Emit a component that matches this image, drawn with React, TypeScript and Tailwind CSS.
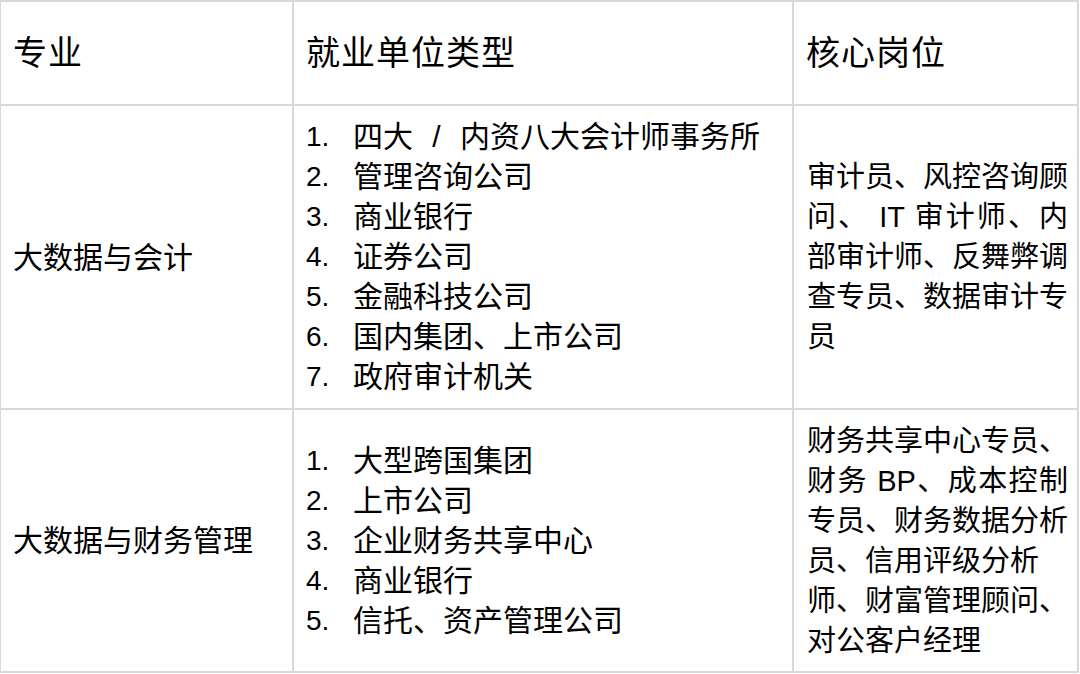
const font = { fontFamily: '"Liberation Sans", "Noto Sans CJK SC", sans-serif' };

const rows = [
  {
    major: "大数据与会计",
    units: [
      "四大 / 内资八大会计师事务所",
      "管理咨询公司",
      "商业银行",
      "证券公司",
      "金融科技公司",
      "国内集团、上市公司",
      "政府审计机关",
    ],
    posts: ["审计员、风控咨询顾", "问、 IT 审计师、内", "部审计师、反舞弊调", "查专员、数据审计专", "员"],
    full: [true, true, true, true, false],
  },
  {
    major: "大数据与财务管理",
    units: ["大型跨国集团", "上市公司", "企业财务共享中心", "商业银行", "信托、资产管理公司"],
    posts: ["财务共享中心专员、", "财务 BP、成本控制", "专员、财务数据分析", "员、信用评级分析", "师、财富管理顾问、", "对公客户经理"],
    full: [true, true, true, false, true, false],
  },
];

export default function App() {
  return (
    <div className="w-[1080px] h-[674px] bg-white" style={font}>
      <div className="grid grid-cols-[291px_498px_283px] grid-rows-[102px_302px_261px] gap-[2px] bg-[#d9d9d9] pl-px pt-[2px] pb-[2px] pr-[2px] w-[1079px] text-black">
        <div className="bg-white flex items-center pl-3 text-[34px] tracking-[1px]">专业</div>
        <div className="bg-white flex items-center pl-3 text-[34px] tracking-[1px]">就业单位类型</div>
        <div className="bg-white flex items-center pl-3 text-[34px] tracking-[1px]">核心岗位</div>

        {rows.map((r) => (
          <Row key={r.major} {...r} />
        ))}
      </div>
    </div>
  );
}

function UnitText({ text }: { text: string }) {
  // the slash line has wide gaps around "/"
  if (!text.includes(" / ")) return <span>{text}</span>;
  const [a, b] = text.split(" / ");
  return (
    <span className="flex">
      <span>{a}</span>
      <span className="w-[47px] text-center">/</span>
      <span>{b}</span>
    </span>
  );
}

function Row({ major, units, posts, full }: { major: string; units: string[]; posts: string[]; full: boolean[] }) {
  return (
    <>
      <div className="bg-white flex items-center pl-3 text-[30px]">{major}</div>
      <div className="bg-white flex flex-col justify-center pl-3 text-[30px] leading-[40px]">
        {units.map((u, i) => (
          <div key={u} className="flex whitespace-nowrap">
            <span className="w-[47px] text-[28px]">{i + 1}.</span>
            <UnitText text={u} />
          </div>
        ))}
      </div>
      <div className="bg-white flex flex-col justify-center pl-[13px] text-[29px] leading-[40px]">
        {posts.map((p, i) => (
          <div
            key={p}
            className={full[i] ? "w-[261px] whitespace-nowrap [text-align-last:justify]" : "whitespace-nowrap"}
          >
            {p}
          </div>
        ))}
      </div>
    </>
  );
}
